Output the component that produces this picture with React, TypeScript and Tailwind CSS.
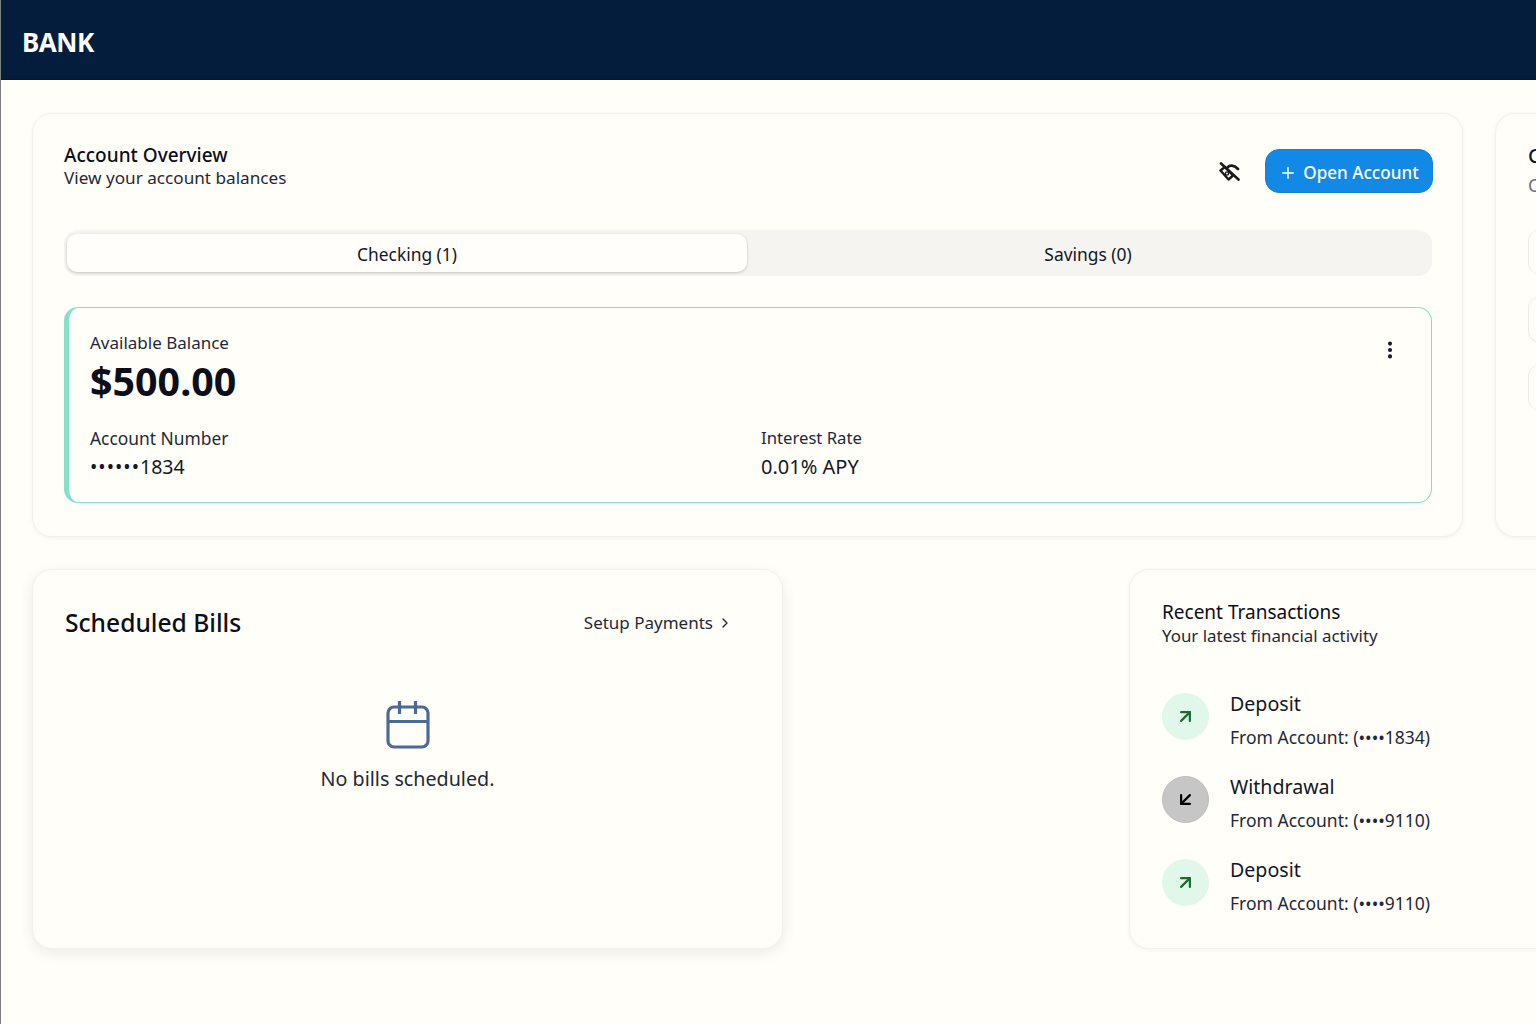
import { Plus, EllipsisVertical, ChevronRight, ArrowUpRight, ArrowDownLeft } from 'lucide-react';

const transactions = [
  { title: 'Deposit', account: '1834', up: true, rowClass: 'h-[83px]' },
  { title: 'Withdrawal', account: '9110', up: false, rowClass: 'h-[83px]' },
  { title: 'Deposit', account: '9110', up: true, rowClass: 'h-[70px]' },
];

function HiddenEyeIcon() {
  return (
    <svg width="22" height="20" viewBox="0 0 22 20" fill="none" stroke="#1a1a1a" strokeLinecap="round" strokeLinejoin="round">
      <path d="M2 2.5 19.5 18.5" strokeWidth="2.6" />
      <path d="M8.5 6.5C10.5 4 14.5 3.5 19 8" strokeWidth="2.8" />
      <path d="M1.5 9.5 6 6 14 14.5 9.5 18.5Z" strokeWidth="2.4" />
      <circle cx="8" cy="12.5" r="1.6" strokeWidth="1.4" />
    </svg>
  );
}

function CalendarIcon() {
  return (
    <svg width="44" height="50" viewBox="0 0 44 50" fill="none" stroke="#4c6a97" strokeWidth="3.2">
      <rect x="2" y="7" width="40" height="40" rx="6" />
      <path d="M2 21.5H42" />
      <path d="M13.5 1V14" />
      <path d="M29.5 1V14" />
    </svg>
  );
}

function TransactionRow({ title, account, up, rowClass }: { title: string; account: string; up: boolean; rowClass: string }) {
  return (
    <div className={`flex gap-[21px] ${rowClass}`}>
      <div className={`mt-[3px] flex h-[47px] w-[47px] items-center justify-center rounded-full ${up ? 'bg-[#e0f7ea] text-[#1b6b2c]' : 'border border-[#bdbdbd] bg-[#c6c6c6] text-black'}`}>
        {up ? <ArrowUpRight size={21} strokeWidth={2.5} /> : <ArrowDownLeft size={21} strokeWidth={2.5} />}
      </div>
      <div>
        <div className="text-[19.6px] leading-[28px] text-[#111827]">{title}</div>
        <div className="mt-[7px] text-[17.5px] leading-[24px] text-[#1f2937]">From Account: (••••{account})</div>
      </div>
    </div>
  );
}

export default function App() {
  return (
    <div className="h-[1024px] w-[1536px] overflow-hidden border-l border-[#808080] bg-[#fffef9] font-['Noto_Sans',sans-serif] text-[#111827]">
      <header className="flex h-[80px] items-center border-b border-[#0a1526] bg-[#041d3d] px-[21px] pt-[5px]">
        <span className="text-[26px] font-bold tracking-[-0.5px] text-white">BANK</span>
      </header>

      <main className="flex flex-col gap-[32px] pl-[31px] pt-[33px]">
        <div className="flex gap-[32px]">
          <section className="h-[424px] w-[1431px] shrink-0 rounded-[20px] border border-[#f3f1ec] bg-[#fffef9] pl-[31px] pr-[30px] pt-[29px] shadow-[0_1px_4px_rgba(0,0,0,0.05)]">
            <div className="flex items-start justify-between">
              <div>
                <h2 className="text-[19px] leading-[24px] font-medium text-[#0b0f19]">Account Overview</h2>
                <p className="text-[17.15px] leading-[22px] text-[#1f2937]">View your account balances</p>
              </div>
              <div className="mr-[-1px] mt-[6px] flex items-center gap-[24px]">
                <HiddenEyeIcon />
                <button className="flex h-[44px] w-[168px] items-center justify-center gap-[6px] rounded-[14px] border border-[#1a7fdc] bg-[#1389e6] pt-[3px] text-[17.1px] font-medium text-white">
                  <Plus size={18} strokeWidth={2} />
                  Open Account
                </button>
              </div>
            </div>

            <div className="mt-[37px] flex h-[46px] items-center rounded-[14px] bg-[#f5f4f0] p-[3px]">
              <div className="flex h-[38px] w-[680px] items-center justify-center rounded-[10px] bg-[#fffefa] pt-[3px] text-[17.4px] shadow-[0_1px_3px_rgba(0,0,0,0.2)]">Checking (1)</div>
              <div className="flex flex-1 items-center justify-center pt-[3px] text-[17.4px]">Savings (0)</div>
            </div>

            <div className="mt-[31px] flex h-[196px] justify-between rounded-[14px] border border-l-[5px] border-[#84e0cb] bg-[#fffef9] pl-[21px] pr-[30px] pt-[23px]">
              <div className="flex-1">
                <div className="text-[17px] leading-[24px] text-[#1f2937]">Available Balance</div>
                <div className="text-[39.4px] leading-[52px] font-bold text-[#0b0f19]">$500.00</div>
                <div className="mt-[19px] grid grid-cols-[671px_1fr]">
                  <div>
                    <div className="text-[17.4px] leading-[24px] text-[#1f2937]">Account Number</div>
                    <div className="mt-[3px] text-[19.5px] leading-[28px]"><span className="tracking-[1px]">••••••</span>1834</div>
                  </div>
                  <div>
                    <div className="text-[16.7px] leading-[24px] text-[#1f2937]">Interest Rate</div>
                    <div className="mt-[3px] text-[20px] leading-[28px]">0.01% APY</div>
                  </div>
                </div>
              </div>
              <EllipsisVertical size={22} strokeWidth={2.5} className="mt-[8px] text-[#111827]" />
            </div>
          </section>

          <section className="h-[424px] w-[400px] shrink-0 rounded-[20px] border border-[#f3f1ec] bg-[#fffef9] px-[32px] pt-[30px] shadow-[0_1px_4px_rgba(0,0,0,0.05)]">
            <h2 className="text-[20px] leading-[24px] font-medium">Cards</h2>
            <p className="mt-[5px] text-[18px] leading-[24px] text-[#6b7280]">Connected</p>
            <div className="mt-[32px] flex flex-col gap-[21px]">
              <div className="h-[46px] rounded-[12px] border border-[#eeece6]" />
              <div className="h-[47px] rounded-[12px] border border-[#eeece6]" />
              <div className="h-[47px] rounded-[12px] border border-[#eeece6]" />
            </div>
          </section>
        </div>

        <div className="flex gap-[346px]">
          <section className="h-[380px] w-[751px] shrink-0 rounded-[20px] border border-[#f3f1ec] bg-[#fffef9] px-[32px] pt-[35px] shadow-[0_4px_14px_rgba(0,0,0,0.08)]">
            <div className="flex items-center justify-between pr-[17px]">
              <h2 className="text-[24.6px] leading-[36px] font-medium text-[#0b0f19]">Scheduled Bills</h2>
              <button className="flex items-center gap-[4px] text-[17px] text-[#1f2937]">
                Setup Payments
                <ChevronRight size={16} strokeWidth={2} />
              </button>
            </div>
            <div className="mt-[59px] flex flex-col items-center">
              <CalendarIcon />
              <p className="mt-[15px] text-[19.7px] leading-[28px] text-[#1f2937]">No bills scheduled.</p>
            </div>
          </section>

          <section className="h-[380px] w-[500px] shrink-0 rounded-[20px] border border-[#f3f1ec] bg-[#fffef9] px-[32px] pt-[29px] shadow-[0_1px_4px_rgba(0,0,0,0.05)]">
            <h2 className="text-[19px] leading-[26px] text-[#0b0f19]">Recent Transactions</h2>
            <p className="text-[16.9px] leading-[22px] text-[#1f2937]">Your latest financial activity</p>
            <div className="mt-[43px]">
              {transactions.map((t, i) => (
                <TransactionRow key={i} {...t} />
              ))}
            </div>
          </section>
        </div>
      </main>
    </div>
  );
}
